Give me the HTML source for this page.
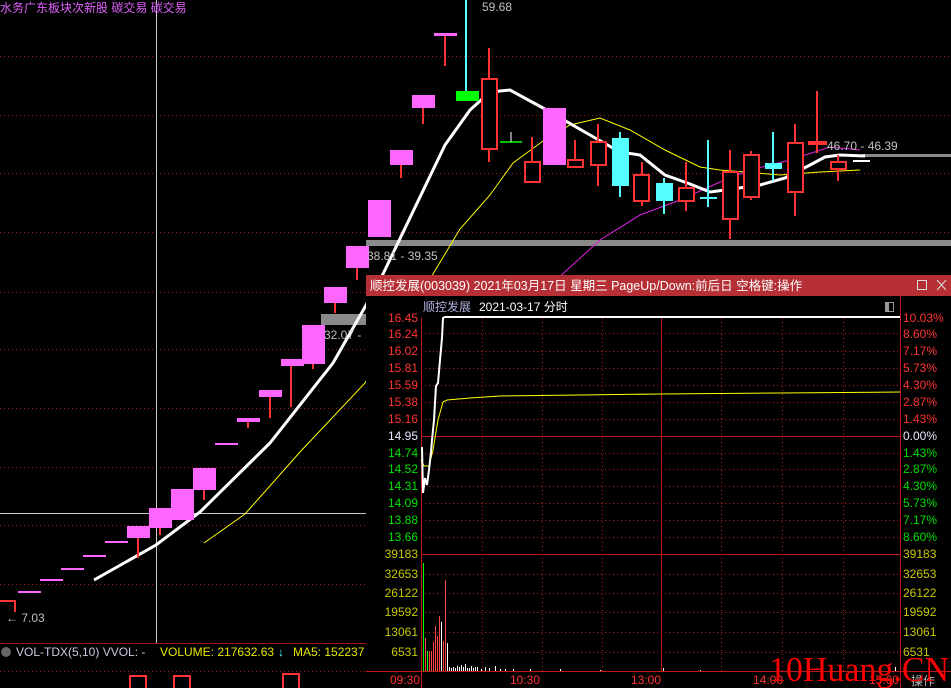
<!DOCTYPE html>
<html><head><meta charset="utf-8"><style>
html,body{margin:0;padding:0;background:#000;width:951px;height:688px;overflow:hidden}
svg{display:block}
text{font-family:"Liberation Sans","Noto Sans CJK SC",sans-serif}
text.wm{font-family:"Liberation Serif",serif}
</style></head><body>
<svg width="951" height="688" viewBox="0 0 951 688" xmlns="http://www.w3.org/2000/svg">
<rect width="951" height="688" fill="#000"/>
<g stroke="#a01818" stroke-width="1" stroke-dasharray="1,3">
<line x1="0" y1="56.5" x2="951" y2="56.5"/><line x1="0" y1="115.5" x2="951" y2="115.5"/>
<line x1="0" y1="173.5" x2="951" y2="173.5"/><line x1="0" y1="232.5" x2="951" y2="232.5"/>
<line x1="0" y1="292.5" x2="366" y2="292.5"/><line x1="0" y1="349.5" x2="366" y2="349.5"/>
<line x1="0" y1="408.5" x2="366" y2="408.5"/><line x1="0" y1="467.5" x2="366" y2="467.5"/>
<line x1="0" y1="525.5" x2="366" y2="525.5"/><line x1="0" y1="584.5" x2="366" y2="584.5"/>
<line x1="0" y1="671.5" x2="366" y2="671.5"/>
</g>
<line x1="156.5" y1="0" x2="156.5" y2="643" stroke="#c8c8c8"/>
<line x1="0" y1="513.5" x2="366" y2="513.5" stroke="#c8c8c8"/>
<rect x="366" y="240" width="585" height="6" fill="#8a8a8a"/>
<rect x="862" y="154" width="89" height="3" fill="#8a8a8a"/>
<rect x="321" y="314" width="45" height="11" fill="#8a8a8a"/>
<polyline fill="none" stroke="#ffff00" stroke-width="1" points="204,543 245,514 300,452 365,383 433,274 460,229 490,195 513,163 543,141 570,125 600,118 630,130 665,150 700,167 720,170 745,172 780,175 820,172 860,170"/>
<polyline fill="none" stroke="#e020e0" stroke-width="1" points="556,280 600,240 640,215 680,200 720,182 750,170 790,160 830,147 860,150"/>
<polyline fill="none" stroke="#fff" stroke-width="3" points="94,580 156,545 200,512 270,443 333,363 365,307 383,274 445,145 470,110 490,92 510,90 543,108 590,135 620,152 640,155 665,175 690,184 710,192 725,190 760,185 785,178 810,165 825,157 840,155 865,156"/>
<g stroke="#ff66ff" stroke-width="2">
<line x1="18" y1="592" x2="41" y2="592"/><line x1="40" y1="580" x2="63" y2="580"/>
<line x1="61" y1="569" x2="84" y2="569"/><line x1="83" y1="556" x2="106" y2="556"/>
<line x1="105" y1="542" x2="128" y2="542"/><line x1="215" y1="444" x2="238" y2="444"/>
</g>
<g stroke="#ff3333" stroke-width="2">
<line x1="138" y1="530" x2="138" y2="558"/><line x1="160" y1="515" x2="160" y2="535"/>
<line x1="182" y1="500" x2="182" y2="520"/><line x1="204" y1="475" x2="204" y2="500"/>
<line x1="248" y1="418" x2="248" y2="428"/><line x1="270" y1="392" x2="270" y2="418"/>
<line x1="291" y1="360" x2="291" y2="407"/><line x1="313" y1="330" x2="313" y2="369"/>
<line x1="335" y1="290" x2="335" y2="313"/><line x1="357" y1="250" x2="357" y2="280"/>
<line x1="401" y1="152" x2="401" y2="178"/><line x1="423" y1="97" x2="423" y2="124"/>
<line x1="445" y1="34" x2="445" y2="66"/>
<line x1="489" y1="48" x2="489" y2="162"/><line x1="532" y1="137" x2="532" y2="182"/>
<line x1="575" y1="140" x2="575" y2="168"/><line x1="598" y1="124" x2="598" y2="186"/>
<line x1="642" y1="162" x2="642" y2="206"/><line x1="686" y1="162" x2="686" y2="211"/>
<line x1="730" y1="150" x2="730" y2="239"/><line x1="751" y1="151" x2="751" y2="200"/>
<line x1="795" y1="124" x2="795" y2="216"/><line x1="817" y1="91" x2="817" y2="153"/>
<line x1="838" y1="155" x2="838" y2="181"/>
</g>
<g fill="#ff66ff">
<rect x="127" y="526" width="23" height="12"/><rect x="149" y="508" width="23" height="20"/>
<rect x="171" y="489" width="23" height="31"/><rect x="193" y="468" width="23" height="22"/>
<rect x="237" y="418" width="23" height="4"/><rect x="259" y="390" width="23" height="7"/>
<rect x="281" y="359" width="23" height="7"/><rect x="302" y="325" width="23" height="39"/>
<rect x="324" y="287" width="23" height="16"/><rect x="346" y="246" width="23" height="22"/>
<rect x="368" y="200" width="23" height="37"/><rect x="390" y="150" width="23" height="15"/>
<rect x="412" y="95" width="23" height="13"/><rect x="434" y="33" width="23" height="3"/>
<rect x="543" y="108" width="23" height="57"/>
</g>
<line x1="466" y1="0" x2="466" y2="91" stroke="#55ffff" stroke-width="2"/>
<rect x="456" y="91" width="23" height="10" fill="#00ff00"/>
<line x1="500" y1="142" x2="522" y2="142" stroke="#00ff00" stroke-width="1.5"/>
<line x1="511" y1="132" x2="511" y2="142" stroke="#fff" stroke-width="1"/>
<g stroke="#55ffff" stroke-width="2">
<line x1="620" y1="132" x2="620" y2="197"/><line x1="664" y1="178" x2="664" y2="214"/>
<line x1="708" y1="140" x2="708" y2="207"/><line x1="773" y1="132" x2="773" y2="181"/>
<line x1="700" y1="198" x2="717" y2="198"/>
</g>
<g fill="#55ffff">
<rect x="612" y="138" width="17" height="48"/><rect x="656" y="183" width="17" height="18"/>
<rect x="765" y="163" width="17" height="6"/>
</g>
<g fill="#000" stroke="#ff3333" stroke-width="2">
<rect x="482" y="79" width="15" height="70"/><rect x="525" y="162" width="15" height="20"/>
<rect x="568" y="160" width="15" height="7"/><rect x="591" y="142" width="15" height="23"/>
<rect x="634" y="175" width="15" height="26"/><rect x="679" y="188" width="15" height="13"/>
<rect x="723" y="172" width="15" height="47"/><rect x="744" y="155" width="15" height="42"/>
<rect x="788" y="143" width="15" height="49"/><rect x="831" y="162" width="15" height="7"/>
</g>
<rect x="808" y="141" width="19" height="4" fill="#ff3333"/>
<line x1="853" y1="161" x2="870" y2="161" stroke="#fff" stroke-width="2"/>
<polyline points="0,601 15,601 15,612" fill="none" stroke="#ff3333" stroke-width="2"/>
<g font-size="12" fill="#c0c0c0">
<text x="482" y="11">59.68</text>
<text x="367" y="260">38.81 - 39.35</text>
<text x="324" y="339">32.07 -</text>
<text x="827" y="150">46.70 - 46.39</text>
<text x="6" y="622">← 7.03</text>
</g>
<text x="0" y="12" font-size="12" fill="#e060ff">水务广东板块次新股 碳交易 碳交易</text>
<line x1="0" y1="643.5" x2="366" y2="643.5" stroke="#a01818"/>
<circle cx="6" cy="652" r="5" fill="#666"/>
<text x="16" y="656" font-size="12" fill="#c8c8e0">VOL-TDX(5,10) VVOL: -</text>
<text x="160" y="656" font-size="12" fill="#e6e600">VOLUME: 217632.63</text>
<text x="278" y="656" font-size="12" fill="#55ffff">↓</text>
<text x="293" y="656" font-size="12" fill="#e6e600">MA5: 152237</text>
<g fill="none" stroke="#ff3333" stroke-width="2">
<rect x="130" y="676" width="16" height="14"/><rect x="174" y="676" width="16" height="14"/><rect x="283" y="674" width="16" height="16"/>
</g>
<rect x="366" y="275" width="585" height="413" fill="#000"/>
<rect x="366" y="275" width="585" height="21" fill="#b52f35"/>
<text x="370" y="290" font-size="12.5" fill="#fff">顺控发展(003039) 2021年03月17日 星期三 PageUp/Down:前后日 空格键:操作</text>
<rect x="917.5" y="280.5" width="9" height="9" fill="none" stroke="#ddd"/>
<path d="M937 280 L946 290 M946 280 L937 290" stroke="#ddd"/>
<text x="423" y="311" font-size="12" fill="#b0b0e0">顺控发展</text>
<text x="479" y="311" font-size="12" fill="#fff">2021-03-17 分时</text>
<rect x="885.5" y="302.5" width="8" height="9" fill="none" stroke="#999"/>
<rect x="886" y="303" width="3" height="8" fill="#999"/>
<g stroke="#c01818" stroke-dasharray="1,3">
<line x1="421" y1="333.5" x2="900" y2="333.5"/><line x1="421" y1="351.5" x2="900" y2="351.5"/>
<line x1="421" y1="368.5" x2="900" y2="368.5"/><line x1="421" y1="385.5" x2="900" y2="385.5"/>
<line x1="421" y1="402.5" x2="900" y2="402.5"/><line x1="421" y1="419.5" x2="900" y2="419.5"/>
<line x1="421" y1="453.5" x2="900" y2="453.5"/><line x1="421" y1="469.5" x2="900" y2="469.5"/>
<line x1="421" y1="486.5" x2="900" y2="486.5"/><line x1="421" y1="503.5" x2="900" y2="503.5"/>
<line x1="421" y1="520.5" x2="900" y2="520.5"/><line x1="421" y1="537.5" x2="900" y2="537.5"/>
<line x1="421" y1="574.5" x2="900" y2="574.5"/><line x1="421" y1="593.5" x2="900" y2="593.5"/>
<line x1="421" y1="612.5" x2="900" y2="612.5"/><line x1="421" y1="632.5" x2="900" y2="632.5"/>
<line x1="421" y1="652.5" x2="900" y2="652.5"/>
<line x1="482.5" y1="318" x2="482.5" y2="671"/><line x1="542.5" y1="318" x2="542.5" y2="671"/>
<line x1="602.5" y1="318" x2="602.5" y2="671"/><line x1="721.5" y1="318" x2="721.5" y2="671"/>
<line x1="782.5" y1="318" x2="782.5" y2="671"/><line x1="843.5" y1="318" x2="843.5" y2="671"/>
</g>
<g stroke="#c01818">
<line x1="421.5" y1="318" x2="421.5" y2="688"/><line x1="900.5" y1="296" x2="900.5" y2="688"/>
<line x1="661.5" y1="318" x2="661.5" y2="671"/>
<line x1="421" y1="436.5" x2="900" y2="436.5"/><line x1="421" y1="554.5" x2="900" y2="554.5"/>
<line x1="366" y1="671.5" x2="951" y2="671.5"/>
</g>
<polyline fill="none" stroke="#ffff00" stroke-width="1" points="421,460 424,466 429,466 433,450 438,420 443,402 447,400 470,398 500,396 580,395 660,394 780,393 900,392"/>
<polyline fill="none" stroke="#fff" stroke-width="2" points="422,447 423,493 425,478 427,485 429,470 431,452 432,440 434,420 436,386 438,383 440,360 442,338 443,318 445,317 900,317"/>
<g stroke-width="1">
<line x1="423.5" y1="563" x2="423.5" y2="671" stroke="#00ff00"/>
<line x1="425.5" y1="638" x2="425.5" y2="671" stroke="#ff4444"/>
<line x1="427.5" y1="651" x2="427.5" y2="671" stroke="#00ff00"/>
<line x1="429.5" y1="651" x2="429.5" y2="671" stroke="#ff4444"/>
<line x1="431.5" y1="651" x2="431.5" y2="671" stroke="#ff4444"/>
<line x1="433.5" y1="642" x2="433.5" y2="671" stroke="#ff4444"/>
<line x1="435.5" y1="626" x2="435.5" y2="671" stroke="#ff4444"/>
<line x1="437.5" y1="636" x2="437.5" y2="671" stroke="#ff4444"/>
<line x1="439.5" y1="616" x2="439.5" y2="671" stroke="#ff4444"/>
<line x1="441.5" y1="622" x2="441.5" y2="671" stroke="#fff"/>
<line x1="443.5" y1="641" x2="443.5" y2="671" stroke="#ff4444"/>
<line x1="445.5" y1="580" x2="445.5" y2="671" stroke="#ff4444"/>
<line x1="447.5" y1="643" x2="447.5" y2="671" stroke="#fff"/>
</g>
<path d="M449.5 667V671M451.5 668V671M453.5 667V671M455.5 668V671M457.5 666V671M459.5 667V671M461.5 665V671M463.5 667V671M465.5 664V671M467.5 668V671M469.5 668V671M471.5 666V671M473.5 668V671M475.5 667V671M477.5 667V671M481.5 669V671M485.5 667V671M489.5 668V671M495.5 666V671M500.5 669V671M505.5 669V671M513.5 669V671M530.5 669V671M560.5 669V671M600.5 670V671M663.5 668V671M700.5 670V671M800.5 670V671M895.5 667V671" stroke="#fff"/>
<g font-size="12" text-anchor="end">
<text x="418" y="322" fill="#ff3333">16.45</text><text x="418" y="338" fill="#ff3333">16.24</text>
<text x="418" y="355" fill="#ff3333">16.02</text><text x="418" y="372" fill="#ff3333">15.81</text>
<text x="418" y="389" fill="#ff3333">15.59</text><text x="418" y="406" fill="#ff3333">15.38</text>
<text x="418" y="423" fill="#ff3333">15.16</text><text x="418" y="440" fill="#e8e8ff">14.95</text>
<text x="418" y="457" fill="#00e000">14.74</text><text x="418" y="473" fill="#00e000">14.52</text>
<text x="418" y="490" fill="#00e000">14.31</text><text x="418" y="507" fill="#00e000">14.09</text>
<text x="418" y="524" fill="#00e000">13.88</text><text x="418" y="541" fill="#00e000">13.66</text>
<text x="418" y="558" fill="#c8c800">39183</text><text x="418" y="578" fill="#c8c800">32653</text>
<text x="418" y="597" fill="#c8c800">26122</text><text x="418" y="616" fill="#c8c800">19592</text>
<text x="418" y="636" fill="#c8c800">13061</text><text x="418" y="656" fill="#c8c800">6531</text>
</g>
<g font-size="12">
<text x="903" y="322" fill="#ff3333">10.03%</text><text x="903" y="338" fill="#ff3333">8.60%</text>
<text x="903" y="355" fill="#ff3333">7.17%</text><text x="903" y="372" fill="#ff3333">5.73%</text>
<text x="903" y="389" fill="#ff3333">4.30%</text><text x="903" y="406" fill="#ff3333">2.87%</text>
<text x="903" y="423" fill="#ff3333">1.43%</text><text x="903" y="440" fill="#e8e8ff">0.00%</text>
<text x="903" y="457" fill="#00e000">1.43%</text><text x="903" y="473" fill="#00e000">2.87%</text>
<text x="903" y="490" fill="#00e000">4.30%</text><text x="903" y="507" fill="#00e000">5.73%</text>
<text x="903" y="524" fill="#00e000">7.17%</text><text x="903" y="541" fill="#00e000">8.60%</text>
<text x="903" y="558" fill="#c8c800">39183</text><text x="903" y="578" fill="#c8c800">32653</text>
<text x="903" y="597" fill="#c8c800">26122</text><text x="903" y="616" fill="#c8c800">19592</text>
<text x="903" y="636" fill="#c8c800">13061</text><text x="903" y="656" fill="#c8c800">6531</text>
<text x="390" y="684" fill="#ff3333">09:30</text><text x="510" y="684" fill="#ff3333">10:30</text>
<text x="631" y="684" fill="#ff3333">13:00</text><text x="753" y="684" fill="#ff3333">14:00</text>
<text x="869" y="684" fill="#ff3333">15:00</text><text x="911" y="685" fill="#bbb">操作</text>
</g>
<text class="wm" x="769" y="681" font-size="35" fill="#ff0000" textLength="180" lengthAdjust="spacingAndGlyphs">10Huang.CN</text>
</svg>
</body></html>
